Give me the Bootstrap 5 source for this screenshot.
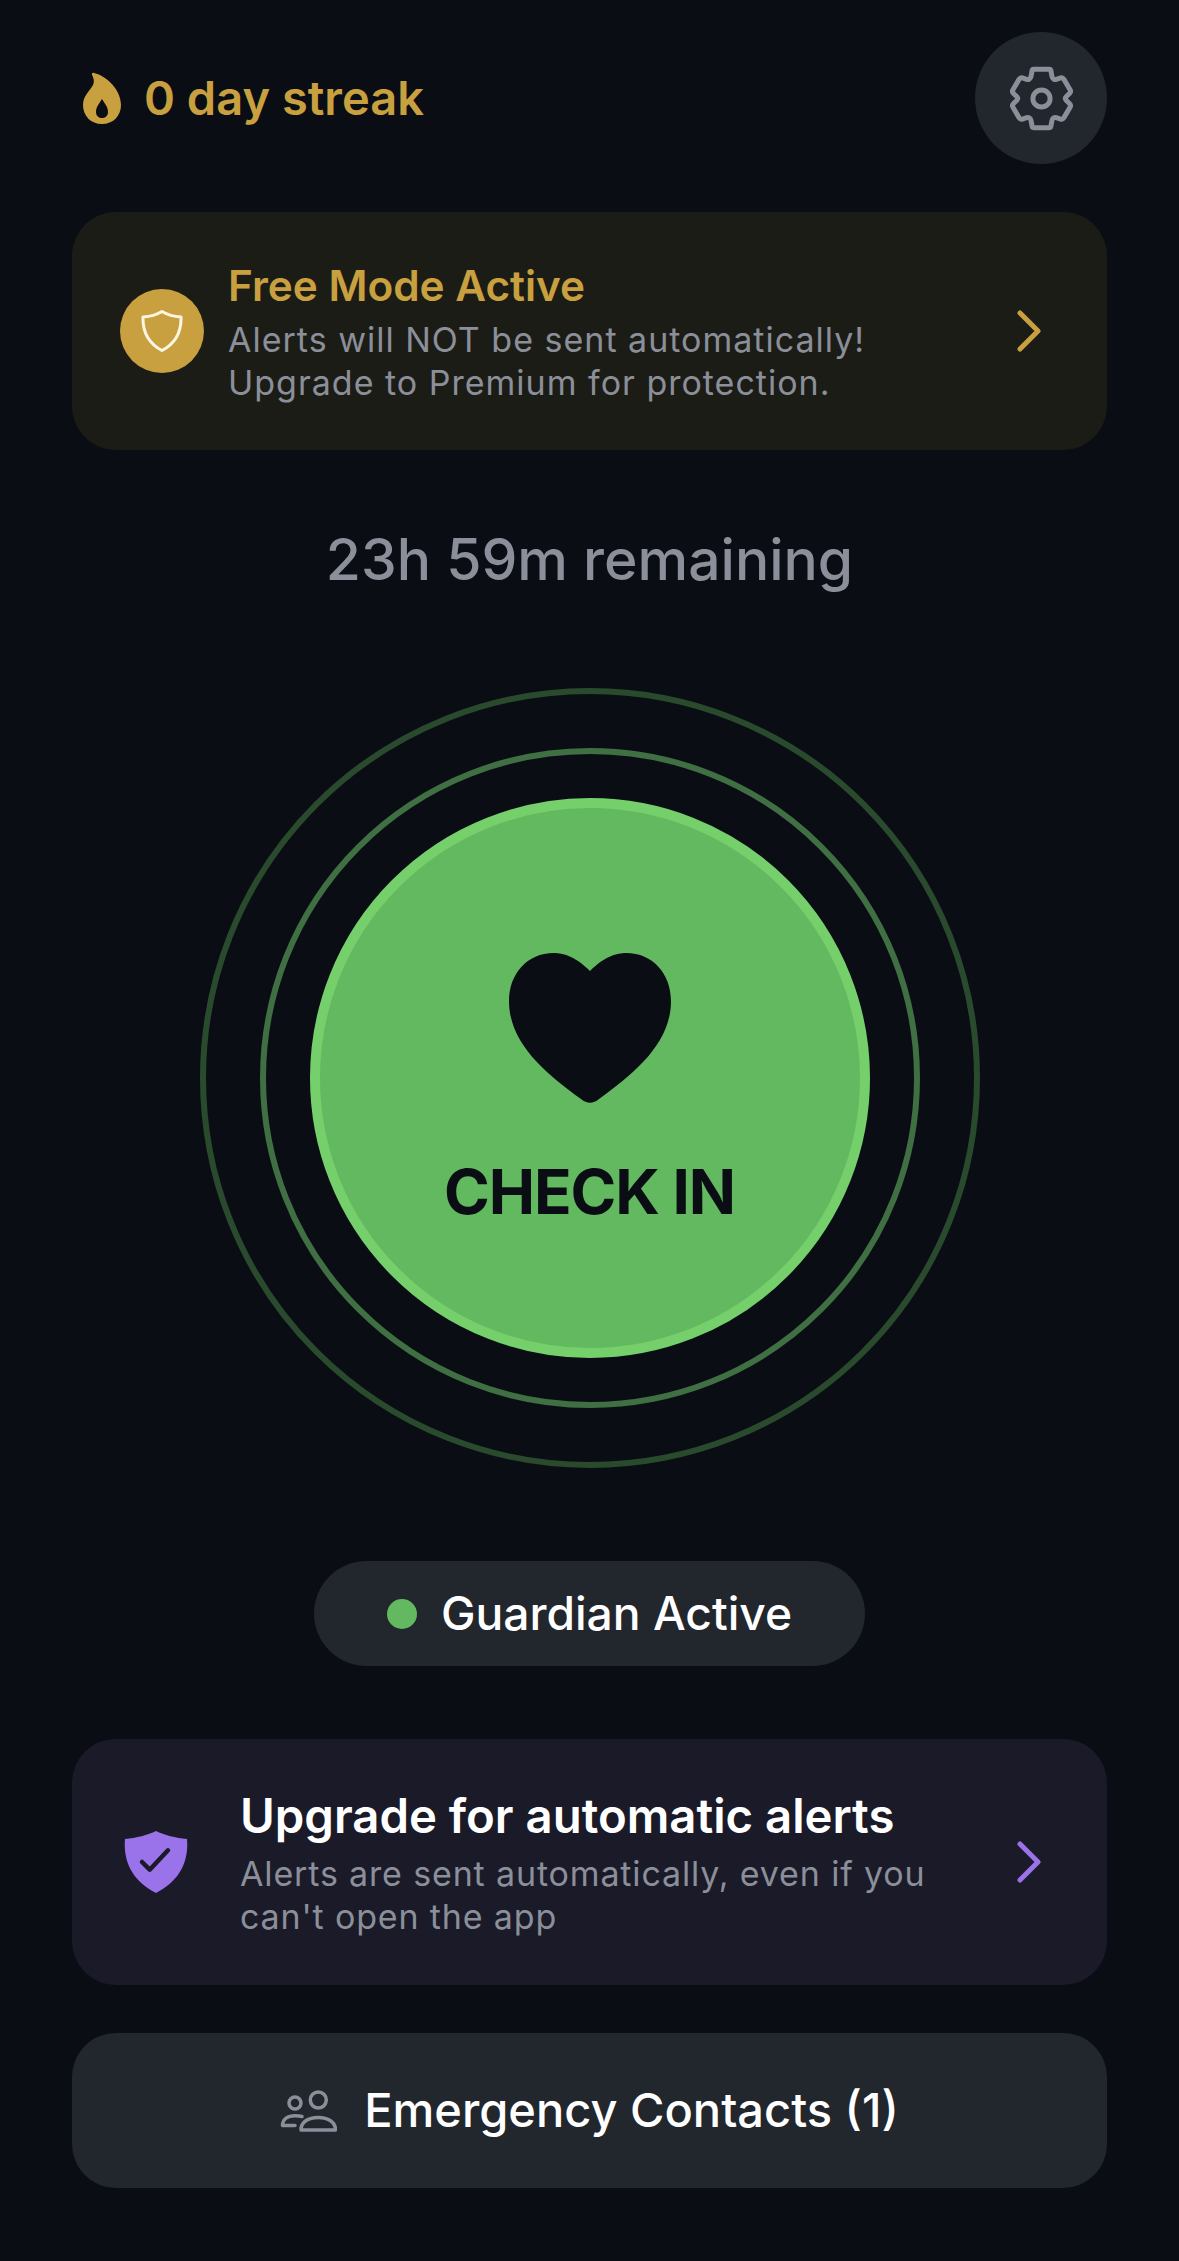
<!DOCTYPE html>
<html lang="en">
  <head>
    <meta charset="UTF-8" />
    <meta name="viewport" content="width=device-width, initial-scale=1.0" />
    <title>Guardian Check In</title>
    <link href="https://cdn.jsdelivr.net/npm/bootstrap@5.3.3/dist/css/bootstrap.min.css" rel="stylesheet" />
    <script src="https://cdn.jsdelivr.net/npm/bootstrap@5.3.3/dist/js/bootstrap.bundle.min.js"></script>
    <style>
      body { background: #0a0e14; font-family: Inter, "Liberation Sans", sans-serif; color: #fff; min-height: 2261px; }
      .screen { padding: 32px 72px 0; }
      .streak-text { color: #c9a03f; font-size: 47px; font-weight: 600; margin: -2px 0 0 23px; line-height: 1; }
      .streak-row { padding-left: 11px; }
      .gear-btn { width: 132px; height: 132px; background: #22262d; border: 0; padding: 0; }
      .panel-box { border: 0; border-radius: 44px; margin-top: 48px; }
      .panel-free { background: #1c1c17; height: 238px; padding: 0 66px 0 48px; }
      .panel-pro { background: #1a1a28; height: 246px; padding: 0 66px 0 52px; margin-top: 73px; }
      .panel-contacts { background: #22262d; height: 155px; margin-top: 48px; }
      .free-circle { width: 84px; height: 84px; background: #c9a03f; flex: none; }
      .free-copy { margin-top: 4px; }
      .free-copy .sub-text { letter-spacing: 1px; }
      .free-title { color: #c9a03f; font-size: 42.3px; font-weight: 600; line-height: 48px; margin-bottom: 8px; }
      .sub-text { color: #8b8f99; font-size: 34px; line-height: 43px; letter-spacing: .85px; }
      .remain-text { color: #8b8f99; font-size: 57px; font-weight: 500; line-height: 70px; margin-top: 75px; text-align: center; }
      .ring-out { width: 780px; height: 780px; border: 6px solid #2a4a2e; margin-top: 93px; }
      .ring-mid { width: 660px; height: 660px; border: 6px solid #3f6f42; }
      .check-btn { width: 560px; height: 560px; background: #63b95f; border: 10px solid #75d06c; color: #0a0e14; padding: 0; }
      .check-text { font-size: 62px; font-weight: 700; line-height: 1; margin-top: 58px; letter-spacing: -1.1px; }
      .heart-icon { margin-top: 20px; }
      .status-pill { width: 551px; height: 105px; background: #22262d; margin-top: 93px; }
      .status-dot { width: 30px; height: 30px; background: #63b95f; margin-right: 24px; }
      .status-text { font-size: 46.2px; font-weight: 500; }
      .pro-copy { margin-left: 52px; margin-top: 3px; }
      .pro-title { font-size: 47.3px; font-weight: 600; line-height: 54px; margin-bottom: 9px; }
      .contacts-text { font-size: 47px; font-weight: 500; margin-left: 27px; }
    </style>
  </head>

  <body>
    <div class="screen">
      <div class="d-flex justify-content-between align-items-center streak-row">
        <div class="d-flex align-items-center">
          <svg width="38" height="52" viewBox="0 0 38 52">
            <path fill="#c9a03f" fill-rule="evenodd" d="M11 1C24 4 38 18 38 33C38 44 30 52 19 52C8 52 0 44 0 33C0 24 6 20 10 13C12 9 10 5 9 3C8.500 1.500 9.500 .5 11 1ZM19 27C22 32 25 35 25 40C25 44 22 46 19 46C16 46 13 44 13 40C13 35 16 32 19 27Z" />
          </svg>
          <span class="streak-text">0 day streak</span>
        </div>
        <button class="gear-btn rounded-circle d-flex align-items-center justify-content-center" type="button" aria-label="Settings">
          <svg width="65" height="65" viewBox="0 0 68 68" fill="none" stroke="#8b8f99" stroke-width="5.200" stroke-linejoin="round">
            <path d="M26 3.500L42 3.500C43.500 3.500 44 4.500 44 6L45 11C45.500 13.500 47.500 14.500 49.500 14L54 12.500C55.500 12 56.500 12.500 57.500 14L64 25C64.800 26.500 64.500 27.500 63.500 28.500L60 32C58.500 33.500 58.500 34.500 60 36L63.500 39.500C64.500 40.500 64.800 41.500 64 43L57.500 54C56.500 55.500 55.500 56 54 55.500L49.500 54C47.500 53.500 45.500 54.500 45 57L44 62C44 63.500 43.500 64.500 42 64.500L26 64.500C24.500 64.500 24 63.500 24 62L23 57C22.500 54.500 20.500 53.500 18.500 54L14 55.500C12.500 56 11.500 55.500 10.500 54L4 43C3.200 41.500 3.500 40.500 4.500 39.500L8 36C9.500 34.500 9.500 33.500 8 32L4.500 28.500C3.500 27.500 3.200 26.500 4 25L10.500 14C11.500 12.500 12.500 12 14 12.500L18.500 14C20.500 14.500 22.500 13.500 23 11L24 6C24 4.500 24.500 3.500 26 3.500Z" />
            <circle cx="34" cy="34" r="9" />
          </svg>
        </button>
      </div>

      <div class="card panel-box panel-free flex-row align-items-center">
        <div class="free-circle rounded-circle d-flex align-items-center justify-content-center">
          <svg width="42" height="42" viewBox="0 0 42 42" fill="none" stroke="#fdf6e3" stroke-width="3" stroke-linejoin="round">
            <path d="M21 1.500C26 4.500 32 6.500 40 7C40.500 22 35 33 21 40.500C7 33 1.500 22 2 7C10 6.500 16 4.500 21 1.500Z" />
          </svg>
        </div>
        <div class="flex-grow-1 ms-4 free-copy">
          <div class="free-title">Free Mode Active</div>
          <div class="sub-text">Alerts will NOT be sent automatically!<br />Upgrade to Premium for protection.</div>
        </div>
        <svg width="24" height="42" viewBox="0 0 24 42" fill="none" stroke="#c9a03f" stroke-width="5" stroke-linecap="round" stroke-linejoin="round">
          <path d="M3 3L21 21L3 39" />
        </svg>
      </div>

      <div class="remain-text">23h 59m remaining</div>

      <div class="d-flex justify-content-center">
        <div class="ring-out rounded-circle d-flex align-items-center justify-content-center">
          <div class="ring-mid rounded-circle d-flex align-items-center justify-content-center">
            <button class="check-btn rounded-circle d-flex flex-column align-items-center justify-content-center" type="button">
              <svg class="heart-icon" width="162" height="150" viewBox="0 0 162 150">
                <path fill="#0a0e14" d="M81 18C66 3 54 0 45 0C18 0 0 21 0 48C0 90 36 120 72 146C78 151 84 151 90 146C126 120 162 90 162 48C162 21 144 0 117 0C108 0 96 3 81 18Z" />
              </svg>
              <span class="check-text">CHECK IN</span>
            </button>
          </div>
        </div>
      </div>

      <div class="d-flex justify-content-center">
        <div class="status-pill rounded-pill d-flex align-items-center justify-content-center">
          <span class="status-dot rounded-circle"></span>
          <span class="status-text">Guardian Active</span>
        </div>
      </div>

      <div class="card panel-box panel-pro flex-row align-items-center">
        <svg class="flex-shrink-0" width="64" height="62" viewBox="0 0 64 62">
          <path fill="#9a72ea" d="M32 0C40 4 52 7 63 8C65 30 56 50 32 62C8 50 -1 30 1 8C12 7 24 4 32 0Z" />
          <path fill="none" stroke="#1a1a28" stroke-width="4.500" stroke-linecap="round" stroke-linejoin="round" d="M18 31L25.700 38.700L44 19.300" />
        </svg>
        <div class="flex-grow-1 pro-copy">
          <div class="pro-title">Upgrade for automatic alerts</div>
          <div class="sub-text">Alerts are sent automatically, even if you<br />can't open the app</div>
        </div>
        <svg width="24" height="42" viewBox="0 0 24 42" fill="none" stroke="#9a72ea" stroke-width="5" stroke-linecap="round" stroke-linejoin="round">
          <path d="M3 3L21 21L3 39" />
        </svg>
      </div>

      <div class="card panel-box panel-contacts flex-row align-items-center justify-content-center">
        <svg width="57" height="42" viewBox="0 0 57 42" fill="none" stroke="#8b8f99" stroke-width="3.500" stroke-linecap="round" stroke-linejoin="round">
          <circle cx="38.300" cy="10" r="8" />
          <circle cx="15" cy="13" r="6" />
          <path d="M21 40C21 32 28 27.500 38.300 27.500C48 27.500 55.500 32 55.500 40Z" />
          <path d="M22 26.500C20 26 18 25.800 15 25.800C8 25.800 2.500 29 2.500 35.500L15 35.500" />
        </svg>
        <span class="contacts-text">Emergency Contacts (1)</span>
      </div>
    </div>
  </body>
</html>
